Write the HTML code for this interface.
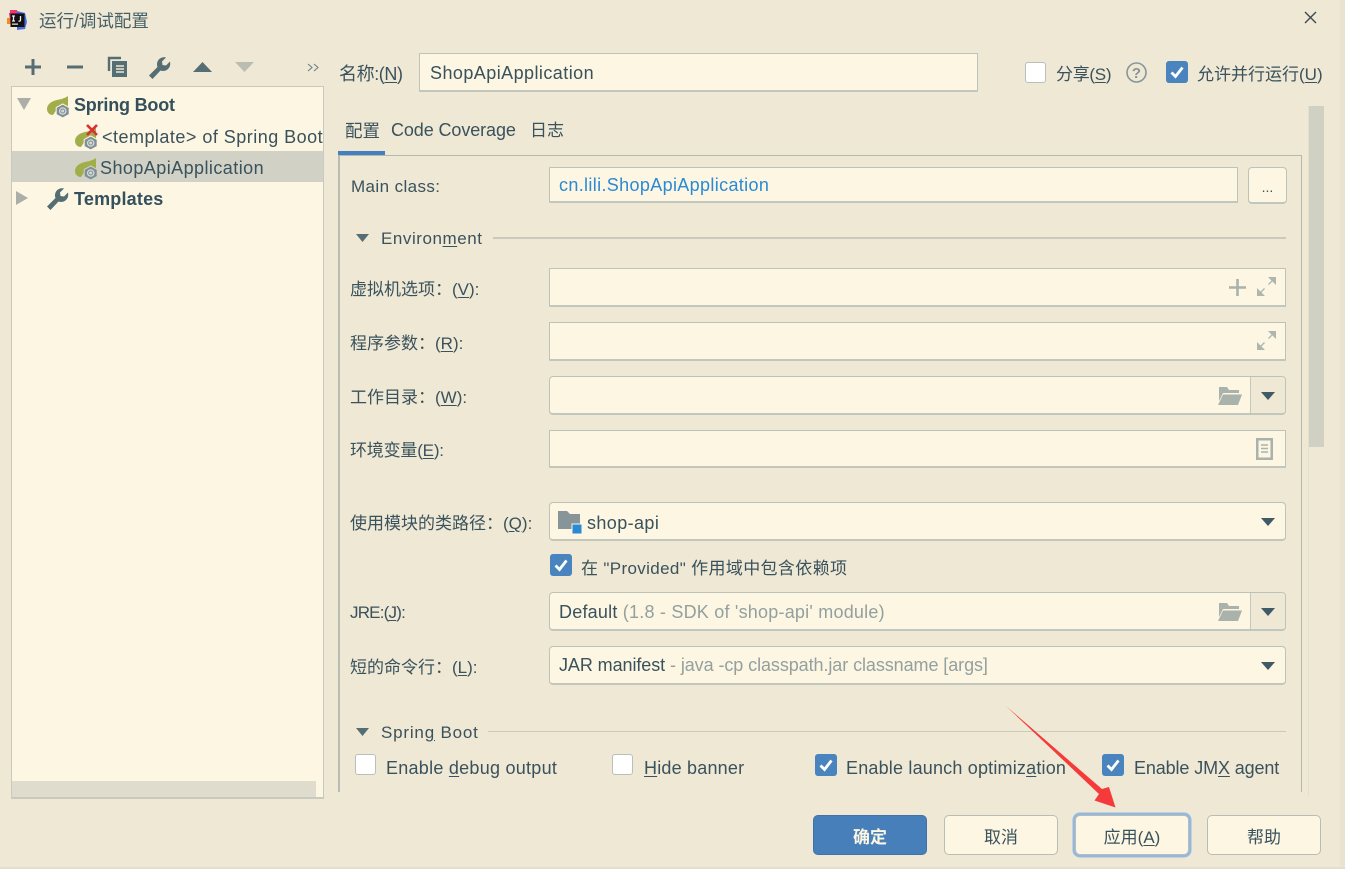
<!DOCTYPE html>
<html><head><meta charset="utf-8"><style>
html,body{margin:0;padding:0;width:1345px;height:869px;overflow:hidden;background:#efe8d5}
body{position:relative;font-family:"Liberation Sans","Noto Sans CJK SC",sans-serif;font-size:18px;color:#3a525c}
.t{position:absolute;white-space:nowrap;line-height:24px;height:24px}
.b{font-weight:bold}
.f{position:absolute;box-sizing:border-box;background:#fdf6e3;border:1px solid #bcc3ba;border-bottom:2px solid #c2c7bd;border-radius:1px}
.r{border-radius:4px}
.c{position:absolute;box-sizing:border-box;width:21px;height:21px;border-radius:3px;background:#fff;border:1px solid #b9bfba}
.k{position:absolute;width:22px;height:22px}
svg{position:absolute;overflow:visible}
.btn{position:absolute;box-sizing:border-box;width:114px;height:40px;top:815px;background:#fdf6e3;border:1.500px solid #b9bdb4;border-radius:5px;text-align:center;line-height:43px;font-size:17px}
u{text-underline-offset:2px}
.g{color:#93a09f}
</style></head><body>

<!-- title -->
<svg style="left:7px;top:10px" width="20" height="20" viewBox="0 0 20 20"><path d="M3 0h7v6H3z" fill="#f0366f"/><path d="M0 8h4v6H0z" fill="#f58a1f"/><path d="M2 3h5v14H4z" fill="#e8316f"/><path d="M10 1l8 2 2 9-2 7-8 1z" fill="#4a6ee0"/><rect x="3.500" y="3.500" width="14" height="13.500" fill="#111"/><rect x="5" y="13.500" width="6" height="1.300" fill="#ddd"/><path d="M5 6h3M6.500 6v5M5 11h3M13.500 6v4q0 1.500-2 1" stroke="#eee" stroke-width="1.300" fill="none"/></svg>
<div class="t" style="left:39px;top:9px;font-size:17.500px;color:#455f66">运行/调试配置</div>
<svg style="left:1304px;top:11px" width="13" height="13"><path d="M1 1L12 12M12 1L1 12" stroke="#3c4a50" stroke-width="1.400"/></svg>

<!-- toolbar -->
<svg style="left:24px;top:58px" width="18" height="18"><path d="M1 9h16M9 1v16" stroke="#546e74" stroke-width="3"/></svg>
<svg style="left:66px;top:58px" width="18" height="18"><path d="M1 9h16" stroke="#546e74" stroke-width="3"/></svg>
<svg style="left:108px;top:57px" width="20" height="20"><path d="M1 14V1h12" stroke="#546e74" stroke-width="2.400" fill="none"/><path d="M4 4h15v16H4z" fill="#546e74"/><path d="M8 9h8M8 12h8M8 15h8" stroke="#efe8d5" stroke-width="1.500"/></svg>
<svg style="left:149px;top:57px" width="22" height="22" viewBox="0 0 22 22"><path d="M0 18.500L8.500 10C6.500 4.500 11 -1 17 0.500L13 4.500L13.500 8L17 8.500L21 4.500C22.500 11 17 15.500 11.500 13.500L3.500 22Z" fill="#546e74"/></svg>
<svg style="left:193px;top:62px" width="19" height="10"><path d="M0 10L9.500 0L19 10Z" fill="#546e74"/></svg>
<svg style="left:235px;top:62px" width="19" height="10"><path d="M0 0L9.500 10L19 0Z" fill="#b9bdb4"/></svg>
<svg style="left:307px;top:63px" width="12" height="9"><path d="M1 1L5 4.500L1 8M7 1L11 4.500L7 8" stroke="#6c8086" stroke-width="1.100" fill="none"/></svg>

<!-- left tree -->
<div style="position:absolute;left:11px;top:86px;width:313px;height:713px;box-sizing:border-box;background:#fdf6e3;border:1px solid #c9cabf;border-bottom:2px solid #c9cabf"></div>
<div style="position:absolute;left:12px;top:151px;width:311px;height:31px;background:#d1d1c6"></div>
<div style="position:absolute;left:12px;top:781px;width:304px;height:16px;background:#dfdccd"></div>

<svg style="left:17px;top:98px" width="14" height="12"><path d="M0 0H14L7 12Z" fill="#adaea8"/></svg>
<svg style="left:16px;top:191px" width="12" height="14"><path d="M0 0V14L12 7Z" fill="#adaea8"/></svg>

<svg style="left:47px;top:96px" width="24" height="23" viewBox="0 0 24 23"><path d="M0 13C0 8 5 5 10 4C15 3 18 2 21 0V13H10L6 19C2 19 0 16 0 13Z" fill="#a2ae49"/><path d="M15.700 8l6.500 3.500v7L15.700 22l-6.500-3.500v-7z" fill="#7f8f96" stroke="#fdf6e3" stroke-width="1"/><circle cx="15.700" cy="15" r="3.800" fill="#d5dad4"/><circle cx="15.700" cy="15" r="2" fill="none" stroke="#7f8f96" stroke-width="1"/></svg>
<div class="t b" style="left:74px;top:93px;font-size:18px;color:#34505c;letter-spacing:-.2px">Spring Boot</div>

<svg style="left:75px;top:124px" width="26" height="26" viewBox="0 0 26 26"><path d="M0 17C0 12 5 9 10 8C15 7 18 6 21 4V17H10L6 23C2 23 0 20 0 17Z" fill="#a2ae49"/><path d="M15.700 12l6.500 3.500v7L15.700 26l-6.500-3.500v-7z" fill="#7f8f96" stroke="#fdf6e3" stroke-width="1"/><circle cx="15.700" cy="19" r="3.800" fill="#d5dad4"/><circle cx="15.700" cy="19" r="2" fill="none" stroke="#7f8f96" stroke-width="1"/><path d="M12 1L22 11M22 1L12 11" stroke="#db3030" stroke-width="2.600"/></svg>
<div class="t" style="left:102px;top:125px;width:221px;overflow:hidden;letter-spacing:.48px">&lt;template&gt; of Spring Boot</div>

<svg style="left:75px;top:158px" width="24" height="23" viewBox="0 0 24 23"><path d="M0 13C0 8 5 5 10 4C15 3 18 2 21 0V13H10L6 19C2 19 0 16 0 13Z" fill="#a2ae49"/><path d="M15.700 8l6.500 3.500v7L15.700 22l-6.500-3.500v-7z" fill="#7f8f96" stroke="#d1d1c6" stroke-width="1"/><circle cx="15.700" cy="15" r="3.800" fill="#d5dad4"/><circle cx="15.700" cy="15" r="2" fill="none" stroke="#7f8f96" stroke-width="1"/></svg>
<div class="t" style="left:100px;top:156px;letter-spacing:.44px">ShopApiApplication</div>

<svg style="left:47px;top:188px" width="22" height="22" viewBox="0 0 22 22"><path d="M0 18.500L8.500 10C6.500 4.500 11 -1 17 0.500L13 4.500L13.500 8L17 8.500L21 4.500C22.500 11 17 15.500 11.500 13.500L3.500 22Z" fill="#546e74"/></svg>
<div class="t b" style="left:74px;top:187px;font-size:18px;color:#34505c;letter-spacing:.2px">Templates</div>

<!-- name row -->
<div class="t" style="left:339px;top:62px;letter-spacing:-.4px">名称:(<u>N</u>)</div>
<div class="f" style="left:419px;top:53px;width:559px;height:39px"></div>
<div class="t" style="left:430px;top:61px;letter-spacing:.44px">ShopApiApplication</div>

<div class="c" style="left:1025px;top:62px"></div>
<div class="t" style="left:1056px;top:63px;font-size:17px;letter-spacing:-.3px">分享(<u>S</u>)</div>
<svg style="left:1126px;top:62px" width="21" height="21"><circle cx="10.500" cy="10.500" r="9.500" fill="none" stroke="#88959a" stroke-width="1.600"/><text x="10.500" y="16" text-anchor="middle" font-size="15" font-weight="bold" font-family="Liberation Sans" fill="#88959a">?</text></svg>
<svg class="k" style="left:1166px;top:61px"><rect width="22" height="22" rx="3" fill="#4a84bf"/><path d="M5.500 11.500L9.500 15.500L16.500 6.500" stroke="#fff" stroke-width="2.800" fill="none"/></svg>
<div class="t" style="left:1197px;top:63px;font-size:17px">允许并行运行(<u>U</u>)</div>

<!-- scrollbar -->
<div style="position:absolute;left:1309px;top:106px;width:15px;height:341px;background:#d1d1c3"></div>
<div style="position:absolute;left:1308px;top:106px;width:1px;height:690px;background:#e4e0cf"></div>
<div style="position:absolute;left:1340px;top:0;width:5px;height:869px;background:#e9e3d2"></div>

<!-- tabs -->
<div class="t" style="left:345px;top:119px;font-size:17.500px">配置</div>
<div class="t" style="left:391px;top:118px;letter-spacing:-.1px">Code Coverage</div>
<div class="t" style="left:530px;top:119px;font-size:17px">日志</div>
<div style="position:absolute;left:338px;top:151px;width:47px;height:5px;background:#4480c0"></div>

<!-- panel border -->
<div style="position:absolute;left:338px;top:155px;width:964px;height:1px;background:#b5b8ae"></div>
<div style="position:absolute;left:338px;top:156px;width:2px;height:636px;background:#b9bcb2"></div>
<div style="position:absolute;left:1301px;top:156px;width:1px;height:636px;background:#b5b8ae"></div>

<div class="t" style="left:351px;top:175px;font-size:17px;letter-spacing:.4px">Main class:</div>
<div class="f" style="left:549px;top:167px;width:689px;height:36px"></div>
<div class="t" style="left:559px;top:173px;color:#2b8ad4;letter-spacing:.35px">cn.lili.ShopApiApplication</div>
<div class="f r" style="left:1248px;top:167px;width:39px;height:37px;text-align:center;line-height:38px;font-size:14px;color:#3a525c">...</div>

<svg style="left:356px;top:234px" width="13" height="8"><path d="M0 0H13L6.500 8Z" fill="#546e74"/></svg>
<div class="t" style="left:381px;top:227px;font-size:17px;letter-spacing:.55px">Environ<u>m</u>ent</div>
<div style="position:absolute;left:493px;top:237px;width:793px;height:2px;background:#c9cabd"></div>

<div class="t" style="left:350px;top:278px;font-size:17px">虚拟机选项：(<u>V</u>):</div>
<div class="f" style="left:549px;top:268px;width:737px;height:39px"></div>
<svg style="left:1229px;top:279px" width="17" height="17"><path d="M0 8.500h17M8.500 0v17" stroke="#a9b3ab" stroke-width="2.600"/></svg>
<svg style="left:1257px;top:277px" width="19" height="19"><path d="M11 0h8v8zM0 19v-8l8 8z" fill="#adb6af"/><path d="M15.500 3.500L11.500 7.500M3.500 15.500L7.500 11.500" stroke="#adb6af" stroke-width="1.300"/></svg>

<div class="t" style="left:350px;top:332px;font-size:17px">程序参数：(<u>R</u>):</div>
<div class="f" style="left:549px;top:322px;width:737px;height:39px"></div>
<svg style="left:1257px;top:331px" width="19" height="19"><path d="M11 0h8v8zM0 19v-8l8 8z" fill="#adb6af"/><path d="M15.500 3.500L11.500 7.500M3.500 15.500L7.500 11.500" stroke="#adb6af" stroke-width="1.300"/></svg>

<div class="t" style="left:350px;top:386px;font-size:17px">工作目录：(<u>W</u>):</div>
<div class="f r" style="left:549px;top:376px;width:737px;height:39px"></div>
<div style="position:absolute;left:1250px;top:377px;width:35px;height:36px;background:#efe8d5;border-left:1.500px solid #c4c7bc;box-sizing:border-box;border-radius:0 3px 3px 0"></div>
<svg style="left:1218px;top:387px" width="24" height="18"><path d="M1 0h8l2 3h10v3H5L1 14z" fill="#a9b3ab"/><path d="M5 7.500h19L20 18H0z" fill="#a9b3ab"/></svg>
<svg style="left:1261px;top:392px" width="14" height="8"><path d="M0 0H14L7 8Z" fill="#3f5a66"/></svg>

<div class="t" style="left:350px;top:439px;font-size:17px;letter-spacing:-.2px">环境变量(<u>E</u>):</div>
<div class="f" style="left:549px;top:430px;width:737px;height:38px"></div>
<svg style="left:1256px;top:438px" width="17" height="22"><rect width="17" height="22" fill="#a9b3ab"/><rect x="2.500" y="2.500" width="12" height="17" fill="#fdf6e3"/><path d="M5 7h7M5 10.500h7M5 14h7" stroke="#a9b3ab" stroke-width="1.600"/></svg>

<div class="t" style="left:350px;top:512px;font-size:17px">使用模块的类路径：(<u>Q</u>):</div>
<div class="f r" style="left:549px;top:502px;width:737px;height:39px"></div>
<svg style="left:558px;top:511px" width="24" height="24"><path d="M0 0h9l3 3h10v15H0z" fill="#87949a"/><rect x="14" y="13" width="10" height="10" fill="#2b8ad4" stroke="#fdf6e3" stroke-width="1"/></svg>
<div class="t" style="left:587px;top:511px;letter-spacing:.4px">shop-api</div>
<svg style="left:1261px;top:518px" width="14" height="8"><path d="M0 0H14L7 8Z" fill="#3f5a66"/></svg>

<svg class="k" style="left:550px;top:554px"><rect width="22" height="22" rx="3" fill="#4a84bf"/><path d="M5.500 11.500L9.500 15.500L16.500 6.500" stroke="#fff" stroke-width="2.800" fill="none"/></svg>
<div class="t" style="left:581px;top:557px;font-size:17px;letter-spacing:.35px">在 "Provided" 作用域中包含依赖项</div>

<div class="t" style="left:350px;top:601px;font-size:17px;letter-spacing:-.8px">JRE:(<u>J</u>):</div>
<div class="f r" style="left:549px;top:592px;width:737px;height:39px"></div>
<div style="position:absolute;left:1250px;top:593px;width:35px;height:36px;background:#efe8d5;border-left:1.500px solid #c4c7bc;box-sizing:border-box;border-radius:0 3px 3px 0"></div>
<div class="t" style="left:559px;top:600px;letter-spacing:.22px">Default <span class="g">(1.8 - SDK of 'shop-api' module)</span></div>
<svg style="left:1218px;top:603px" width="24" height="18"><path d="M1 0h8l2 3h10v3H5L1 14z" fill="#a9b3ab"/><path d="M5 7.500h19L20 18H0z" fill="#a9b3ab"/></svg>
<svg style="left:1261px;top:608px" width="14" height="8"><path d="M0 0H14L7 8Z" fill="#3f5a66"/></svg>

<div class="t" style="left:350px;top:656px;font-size:17px">短的命令行：(<u>L</u>):</div>
<div class="f r" style="left:549px;top:646px;width:737px;height:39px"></div>
<div class="t" style="left:559px;top:653px;letter-spacing:-.08px">JAR manifest <span class="g">- java -cp classpath.jar classname [args]</span></div>
<svg style="left:1261px;top:662px" width="14" height="8"><path d="M0 0H14L7 8Z" fill="#3f5a66"/></svg>

<svg style="left:356px;top:728px" width="13" height="8"><path d="M0 0H13L6.500 8Z" fill="#546e74"/></svg>
<div class="t" style="left:381px;top:721px;font-size:17px;letter-spacing:.8px">Sprin<u>g</u> Boot</div>
<div style="position:absolute;left:488px;top:731px;width:798px;height:1px;background:#c9cabd"></div>

<div class="c" style="left:355px;top:754px"></div>
<div class="t" style="left:386px;top:756px;letter-spacing:.26px">Enable <u>d</u>ebug output</div>
<div class="c" style="left:612px;top:754px"></div>
<div class="t" style="left:644px;top:756px;width:100px;overflow:hidden;letter-spacing:.2px"><u>H</u>ide banner</div>
<svg class="k" style="left:815px;top:754px"><rect width="22" height="22" rx="3" fill="#4a84bf"/><path d="M5.500 11.500L9.500 15.500L16.500 6.500" stroke="#fff" stroke-width="2.800" fill="none"/></svg>
<div class="t" style="left:846px;top:756px;letter-spacing:.19px">Enable launch optimiz<u>a</u>tion</div>
<svg class="k" style="left:1102px;top:754px"><rect width="22" height="22" rx="3" fill="#4a84bf"/><path d="M5.500 11.500L9.500 15.500L16.500 6.500" stroke="#fff" stroke-width="2.800" fill="none"/></svg>
<div class="t" style="left:1134px;top:756px;letter-spacing:-.12px">Enable JM<u>X</u> agent</div>

<!-- buttons -->
<div class="btn b" style="left:813px;background:#477fbb;border-color:#3f72aa;color:#fdf6e3">确定</div>
<div class="btn" style="left:944px">取消</div>
<div class="btn" style="left:1075px;box-shadow:0 0 0 2.500px #93b9e0">应用(<u>A</u>)</div>
<div class="btn" style="left:1207px">帮助</div>

<!-- red arrow -->
<svg style="left:1000px;top:700px" width="125" height="112"><path d="M6 6L102 89L109 87L115.500 107.500L94.500 100.500L99 94Z" fill="#f53a3a"/></svg>

<div style="position:absolute;left:0;top:867px;width:1345px;height:2px;background:#e4dece"></div>
</body></html>
